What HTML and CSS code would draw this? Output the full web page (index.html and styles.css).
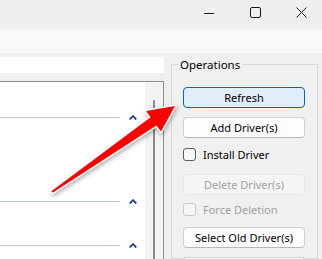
FILE: index.html
```html
<!DOCTYPE html>
<html lang="en">
<head>
  <meta charset="UTF-8" />
  <title>Driver Store Explorer</title>
  <link rel="stylesheet" href="styles.css">
</head>
<body>
  <div class="window">
    <div class="titlebar">
      <div class="caption">
        <span class="cap-btn">
          <svg width="10" height="10" viewBox="0 0 10 10"><path d="M0 6.5h10" stroke="#1b1b1b" stroke-width="1"/></svg>
        </span>
        <span class="cap-btn">
          <svg width="11" height="11" viewBox="0 0 11 11"><rect x="0.5" y="0.5" width="10" height="10" rx="1.5" fill="none" stroke="#1b1b1b" stroke-width="1"/></svg>
        </span>
        <span class="cap-btn">
          <svg width="11" height="11" viewBox="0 0 11 11"><path d="M0.5 0.5l10 10M10.5 0.5l-10 10" stroke="#1b1b1b" stroke-width="1"/></svg>
        </span>
      </div>
    </div>
    <div class="toolbar"></div>

    <div class="content">
      <div class="left">
        <div class="search"></div>
        <div class="list">
          <div class="rows">
            <div class="group-head">
              <span class="line"></span>
              <svg class="chev" width="8" height="5" viewBox="0 0 8 5"><path d="M0.7 4.5L4 1.2L7.3 4.5" fill="none" stroke="#1f3c96" stroke-width="1.8"/></svg>
            </div>
            <div class="group-body tall"></div>
            <div class="group-head">
              <span class="line"></span>
              <svg class="chev" width="8" height="5" viewBox="0 0 8 5"><path d="M0.7 4.5L4 1.2L7.3 4.5" fill="none" stroke="#1f3c96" stroke-width="1.8"/></svg>
            </div>
            <div class="group-body"></div>
            <div class="group-head">
              <span class="line"></span>
              <svg class="chev" width="8" height="5" viewBox="0 0 8 5"><path d="M0.7 4.5L4 1.2L7.3 4.5" fill="none" stroke="#1f3c96" stroke-width="1.8"/></svg>
            </div>
          </div>
          <div class="scrollbar"><div class="thumb"></div></div>
        </div>
      </div>

      <fieldset class="ops">
        <legend>Operations</legend>
        <button class="btn primary">Refresh</button>
        <button class="btn">Add Driver(s)</button>
        <label class="check"><input type="checkbox">Install Driver</label>
        <button class="btn" disabled>Delete Driver(s)</button>
        <label class="check disabled"><input type="checkbox" disabled>Force Deletion</label>
        <button class="btn">Select Old Driver(s)</button>
        <button class="btn"></button>
      </fieldset>
    </div>

    <svg class="arrow" width="322" height="259" viewBox="0 0 322 259">
      <polygon points="175,106 161,131.5 156.4,125.4 52.6,192.8 51.4,191.2 150.6,117.2 146,111"
        fill="#ff0000" stroke="#ffffff" stroke-width="3" stroke-linejoin="round" paint-order="stroke"/>
    </svg>
  </div>
</body>
</html>
```

FILE: styles.css
```css
body {
  margin: 0;
  font-family: 'Noto Sans', sans-serif;
  font-size: 11px;
  color: #1b1b1b;
  background-color: #f0f0f0;
  overflow: hidden;
}
.window {
  position: relative;
  width: 322px;
  height: 259px;
  overflow: hidden;
}
.titlebar {
  height: 30px;
  background-color: #efefef;
}
.caption {
  display: flex;
  justify-content: flex-end;
  margin-right: -2px;
}
.cap-btn {
  width: 46px;
  height: 24px;
  display: flex;
  align-items: center;
  justify-content: center;
}
.toolbar {
  height: 23px;
  background-color: #f9f9f9;
}
.content {
  display: flex;
  gap: 7px;
  height: 206px;
}
.left {
  width: 184px;
  margin-left: -20px;
  padding-top: 4px;
  display: flex;
  flex-direction: column;
}
.search {
  height: 16px;
  flex-shrink: 0;
  background-color: #ffffff;
}
.list {
  flex: 1;
  min-height: 0;
  overflow: hidden;
  margin-top: 8px;
  border: 1px solid #8c8c8c;
  border-bottom: none;
  background-color: #ffffff;
  display: flex;
}
.rows {
  flex: 1;
  padding-top: 29px;
}
.group-head {
  display: flex;
  align-items: center;
  height: 12px;
}
.line {
  flex: 1;
  height: 1px;
  background-color: #b8c4d9;
}
.chev {
  margin: 0 8px 0 9px;
}
.group-body {
  height: 32px;
}
.group-body.tall {
  height: 72px;
}
.scrollbar {
  width: 18px;
  background-color: #f3f3f3;
}
.thumb {
  width: 2px;
  height: 200px;
  margin: 18px 0 0 8px;
  background-color: #8a8a8a;
  border-radius: 1px;
}
.ops {
  width: 147px;
  box-sizing: border-box;
  margin: 3px 0 0 0;
  padding: 14px 12px 0 11px;
  border: 1px solid #d9d9d9;
  display: flex;
  flex-direction: column;
  min-width: 0;
}
.ops legend {
  margin-left: -5px;
  padding: 0 2px;
  line-height: 17px;
  font-size: 11.5px;
  color: #000;
}
.btn {
  height: 21px;
  padding: 0;
  font-family: inherit;
  font-size: 11px;
  color: #000;
  background-color: #fdfdfd;
  border: 1px solid #d1d1d1;
  border-bottom-color: #b8b8b8;
  border-radius: 4px;
  margin-bottom: 9px;
  flex-shrink: 0;
}
.btn.primary {
  background-color: #e0eef9;
  border-color: #0067c0;
}
.btn:disabled {
  background-color: #f5f5f5;
  border-color: #e6e6e6;
  color: #a0a0a0;
}
.check {
  display: flex;
  align-items: center;
  gap: 7px;
  height: 13px;
  color: #000;
  margin-top: 1px;
  margin-bottom: 13px;
  flex-shrink: 0;
}
.check input {
  appearance: none;
  width: 13px;
  height: 13px;
  margin: 0;
  box-sizing: border-box;
  border: 1px solid #5c5c5c;
  border-radius: 3px;
  background-color: #f7f7f7;
}
.check.disabled {
  color: #a0a0a0;
  margin-top: -1px;
  margin-bottom: 11px;
}
.check.disabled input {
  border-color: #c8c8c8;
}
.arrow {
  position: absolute;
  top: 0;
  left: 0;
  pointer-events: none;
  filter: drop-shadow(1px 2px 2px rgba(0, 0, 0, 0.3));
}
```
